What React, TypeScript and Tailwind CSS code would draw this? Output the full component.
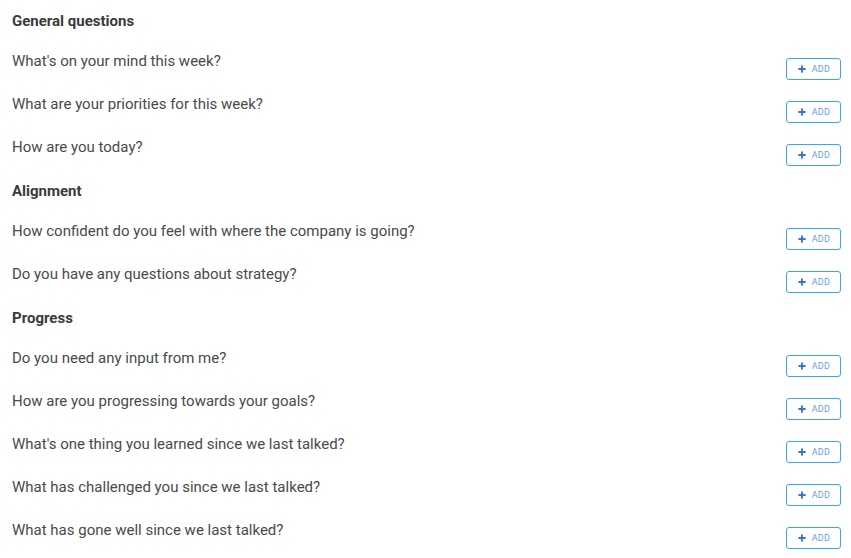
import { Plus } from 'lucide-react';

const sections: { title: string; questions: string[] }[] = [
  {
    title: 'General questions',
    questions: [
      "What's on your mind this week?",
      'What are your priorities for this week?',
      'How are you today?',
    ],
  },
  {
    title: 'Alignment',
    questions: [
      'How confident do you feel with where the company is going?',
      'Do you have any questions about strategy?',
    ],
  },
  {
    title: 'Progress',
    questions: [
      'Do you need any input from me?',
      'How are you progressing towards your goals?',
      "What's one thing you learned since we last talked?",
      'What has challenged you since we last talked?',
      'What has gone well since we last talked?',
    ],
  },
];

function AddButton() {
  return (
    <button
      type="button"
      className="flex h-[22px] w-[55px] items-center justify-center gap-[5px] rounded-[3px] border border-[#3aa9ec] bg-white text-[9px] leading-none tracking-[0.3px] text-[#6a9be9]"
    >
      <Plus size={10} strokeWidth={4.5} className="text-[#3a72d4]" />
      ADD
    </button>
  );
}

export default function App() {
  return (
    <div className="min-h-[558px] bg-white pl-3 pr-[10px] font-['Roboto',sans-serif]">
      {sections.map((s) => (
        <div key={s.title}>
          <div className="flex h-[41px] items-center">
            <h3 className="text-[15px] font-bold leading-5 text-[#3a3a3a]">{s.title}</h3>
          </div>
          {s.questions.map((q) => (
            <div key={q} className="flex h-[43px] items-start justify-between">
              <p className="pt-[10px] text-[15px] leading-5 text-[#4a4a4a]">{q}</p>
              <div className="pt-[17px]">
                <AddButton />
              </div>
            </div>
          ))}
        </div>
      ))}
    </div>
  );
}
